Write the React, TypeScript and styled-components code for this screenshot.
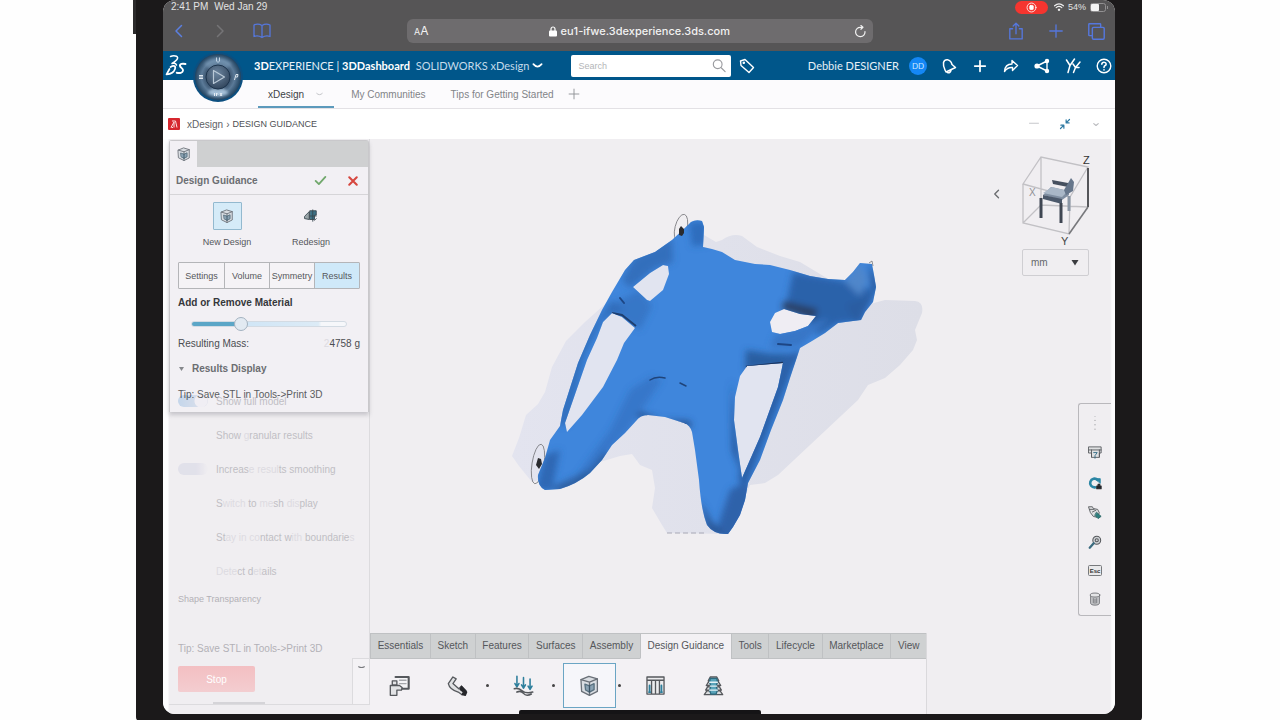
import React from "react";
import styled, { createGlobalStyle } from "styled-components";

const sans = `"Liberation Sans", Arial, sans-serif`;
const brand = `Lato, "Noto Sans", sans-serif`;

const Global = createGlobalStyle`
  * { box-sizing: border-box; }
  body { margin: 0; background: #fefefe; font-family: ${sans}; font-size: 10px; color: #55575b; }
  button { font: inherit; color: inherit; background: none; border: 0; padding: 0; cursor: pointer; }
  svg { display: block; flex: none; }
`;

const Page = styled.div`
  min-height: 100vh;
  display: flex;
  padding: 0 138px 0 133px;
`;
const VolumeKey = styled.div`
  width: 3px;
  height: 34px;
  background: #2b2a2b;
`;
const Tablet = styled.div`
  flex: 1;
  min-width: 0;
  display: flex;
  padding: 0 27px 7px;
  background: #1b191a;
  border-radius: 0 0 4px 4px;
`;
const Screen = styled.main`
  flex: 1;
  min-width: 0;
  position: relative;
  display: flex;
  flex-direction: column;
  background: #fff;
  border-radius: 12px;
  overflow: hidden;
`;
const HomeIndicator = styled.div`
  position: absolute;
  bottom: 0;
  left: 50%;
  width: 242px;
  margin-left: -120px;
  height: 4px;
  border-radius: 2px 2px 0 0;
  background: #151416;
`;

/* Browser chrome */
const StatusBar = styled.div`
  display: flex;
  align-items: center;
  height: 14px;
  padding: 0 7px 0 8px;
  gap: 6px;
  background: #565556;
  color: #e3e3e3;
  font: 10px/14px "Liberation Sans", sans-serif;
  span { white-space: nowrap; }
`;
const RecordPill = styled.span`
  display: flex;
  align-items: center;
  justify-content: center;
  width: 33px;
  height: 13px;
  margin-left: auto;
  border-radius: 7px;
  background: #f5352f;
`;
const StatusGroup = styled.span`
  display: flex;
  align-items: center;
  gap: 4px;
  font-size: 9px;
`;
const BrowserBar = styled.div`
  display: flex;
  align-items: center;
  height: 37px;
  padding-bottom: 3px;
  background: #565556;
`;
const BrowserLeft = styled.div`
  display: flex;
  align-items: center;
  gap: 25px;
  width: 244px;
  padding-left: 8px;
`;
const BrowserRight = styled.div`
  display: flex;
  align-items: center;
  justify-content: flex-end;
  gap: 22px;
  width: 242px;
  padding-right: 9px;
`;
const Address = styled.div`
  flex: 1;
  display: flex;
  align-items: center;
  justify-content: space-between;
  height: 24px;
  padding: 0 6px 0 7px;
  border-radius: 6px;
  background: #6e6c6e;
  color: #f1f1f1;
  font: 500 11px/24px Inter, sans-serif;
`;
const Host = styled.span`
  display: flex;
  align-items: center;
  gap: 4px;
  margin-right: 4px;
`;
const BigA = styled.span`
  font-size: 12px;
  font-weight: 400;
  small { font-size: 9px; }
`;

/* Dashboard header */
const TopBar = styled.header`
  position: relative;
  display: flex;
  align-items: center;
  height: 29px;
  padding: 0 4px 0 91px;
  background: #00568a;
  color: #e6f0f7;
  font: 11px/28px ${brand};
  white-space: nowrap;
`;
const Logo = styled.div`
  position: absolute;
  left: 2px;
  top: 3px;
`;
const Compass = styled.button`
  position: absolute;
  left: 29px;
  top: 0;
`;
const Product = styled.h1`
  margin: 0;
  font: inherit;
  b { color: #fff; }
  span { margin-left: 3px; color: #c4dbea; }
`;
const TopAction = styled.button<{ $narrow?: boolean }>`
  display: flex;
  align-items: center;
  justify-content: center;
  width: ${(p) => (p.$narrow ? "16px" : "31px")};
  height: 28px;
`;
const SearchBox = styled.label`
  display: flex;
  align-items: center;
  width: 160px;
  height: 22px;
  margin-left: 26px;
  padding: 0 5px 0 7px;
  border-radius: 2px;
  background: #fff;
  input {
    flex: 1;
    min-width: 0;
    border: 0;
    padding: 0;
    outline: 0;
    background: none;
    font: 9px/20px ${sans};
  }
  input::placeholder { color: #b3b5b8; opacity: 1; }
`;
const User = styled.span`
  margin-left: auto;
`;
const Avatar = styled.span`
  width: 18px;
  height: 18px;
  margin: 0 0 0 10px;
  border-radius: 50%;
  background: #1487f5;
  color: #cfe7ff;
  font: 8px/18px ${brand};
  text-align: center;
`;
const Actions = styled.div`
  display: flex;
  margin: 0 -8px 0 6px;
`;

const Tabs = styled.nav`
  display: flex;
  height: 29px;
  padding-left: 95px;
  border-bottom: 1px solid #e3e1e5;
  background: #fcfbfd;
  font-size: 10px;
`;
const Tab = styled.button<{ $active?: boolean; $gap: number }>`
  display: flex;
  align-items: center;
  gap: 11px;
  height: 28px;
  padding: ${(p) => (p.$active ? "2px 10px 0" : "2px 0 0")};
  margin-right: ${(p) => p.$gap}px;
  color: ${(p) => (p.$active ? "#3d4247" : "#828488")};
  border-bottom: 2px solid ${(p) => (p.$active ? "#5c9abc" : "transparent")};
`;
const Crumbs = styled.div`
  display: flex;
  align-items: center;
  gap: 7px;
  height: 30px;
  padding: 0 13px 0 5px;
  color: #606266;
`;
const CrumbText = styled.span`
  display: flex;
  align-items: center;
  gap: 3px;
  b { font: 9px/12px ${sans}; color: #4d4f53; }
`;
const WindowTools = styled.span`
  display: flex;
  align-items: center;
  gap: 19px;
  margin-left: auto;
`;

/* Workspace */
const Workspace = styled.section`
  flex: 1;
  display: flex;
  padding: 0 4px 0 6px;
  background: linear-gradient(90deg, #fdfdfe 5px, #f0eef1 6px, #f0eef1 calc(100% - 5px), #fdfdfe calc(100% - 3px));
`;
const Aside = styled.aside`
  position: relative;
  flex: none;
  width: 201px;
  padding-top: 1px;
  margin-bottom: 9px;
  border-right: 1px solid #dcdbde;
  border-bottom: 1px solid #dcdbde;
`;
const Card = styled.div`
  height: 272px;
  border: 1px solid #c9c8cb;
  border-width: 1px 1px 0;
  border-radius: 3px 3px 0 0;
  background: #f2f0f4;
  box-shadow: 0 3px 4px rgba(90, 90, 100, 0.28);
`;
const CardTabs = styled.div`
  display: flex;
  height: 26px;
  background: linear-gradient(90deg, #f2f0f4 27px, #cfd0d1 27px);
  padding: 6px 7px;
`;
const CardHead = styled.div`
  display: flex;
  align-items: center;
  height: 28px;
  padding: 0 9px 0 6px;
  border-bottom: 1px solid #d6d5d8;
  h2 { flex: 1; margin: 0; font-size: 10px; color: #6c6e72; }
  button + button { margin-left: 20px; }
`;
const Modes = styled.div`
  display: grid;
  grid-template-columns: 84px 84px;
  padding: 7px 0 0 15px;
  height: 67px;
`;
const Mode = styled.button<{ $on?: boolean }>`
  display: flex;
  flex-direction: column;
  align-items: center;
  gap: 6px;
  height: 46px;
  font-size: 9px;
  line-height: 12px;
  i {
    display: flex;
    align-items: center;
    justify-content: center;
    width: 29px;
    height: 28px;
    border: 1px solid ${(p) => (p.$on ? "#93b9cf" : "transparent")};
    border-radius: 1px;
    background: ${(p) => (p.$on ? "#d5ebf8" : "transparent")};
  }
`;
const Segments = styled.div`
  display: grid;
  grid-template-columns: repeat(4, 1fr);
  margin: 0 8px;
  height: 27px;
  border: 1px solid #b4b5b8;
  border-radius: 1px;
`;
const Segment = styled.button<{ $on?: boolean }>`
  font-size: 9px;
  background: ${(p) => (p.$on ? "#cfe9f9" : "#f5f3f6")};
  & + & { border-left: 1px solid #b4b5b8; }
`;
const CardBody = styled.div`
  padding: 4px 8px 0;
  line-height: 20px;
  h3 { margin: 0; font-size: 10px; color: #35373a; }
`;
const Slider = styled.input`
  appearance: none;
  display: block;
  width: 156px;
  height: 16px;
  margin: 3px 0 2px 13px;
  background: none;
  &::-webkit-slider-runnable-track {
    height: 6px;
    border: 1px solid #d3dbe3;
    border-radius: 3px;
    background: linear-gradient(90deg, #5ba6c7 30%, #cfe5f6 30%, #dcebf6 82%, #f6f7fa 84%);
  }
  &::-webkit-slider-thumb {
    appearance: none;
    width: 14px;
    height: 14px;
    margin-top: -5px;
    border: 1px solid #a3b2c0;
    border-radius: 50%;
    background: #e2eaf2;
  }
`;
const Mass = styled.div`
  display: flex;
  justify-content: space-between;
  height: 20px;
  color: #4b4d51;
`;
const Disclosure = styled.button`
  display: flex;
  align-items: center;
  gap: 6px;
  height: 20px;
  margin: 5px 0 6px;
  font-weight: bold;
  color: #6b6d71;
`;
const Tip = styled.p<{ $faded?: boolean }>`
  margin: 0;
  font-size: 10px;
  line-height: 20px;
  color: ${(p) => (p.$faded ? "#b3b1b7" : "#5a5c60")};
`;

/* Options fading out under the card */
const Fading = styled.div`
  position: relative;
  margin-top: -28px;
  padding: 0 9px;
`;
const Option = styled.label`
  display: flex;
  align-items: center;
  height: 34px;
  font-size: 10px;
  white-space: pre;
  color: #c0bec4;
`;
const Toggle = styled.input<{ $tint: string }>`
  appearance: none;
  width: 30px;
  height: 12px;
  margin: 0 8px 0 0;
  border-radius: 6px;
  background: ${(p) => p.$tint};
  mix-blend-mode: multiply;
`;
const Faint = styled.span`
  color: #dddbe1;
`;
const FadingTitle = styled.div`
  height: 22px;
  margin-bottom: 29px;
  font-size: 9px;
  line-height: 22px;
  color: #b3b1b7;
`;
const Stop = styled.button`
  display: block;
  width: 77px;
  height: 26px;
  margin-top: 7px;
  border-radius: 2px;
  background: linear-gradient(180deg, #f3bfc2, #f3cdd0);
  color: #fff;
`;
const ScrollHint = styled.div`
  width: 52px;
  height: 2px;
  margin: 10px 0 0 35px;
  background: #d5d4d8;
`;
const PanelScroll = styled.button`
  position: absolute;
  right: 0;
  bottom: 0;
  display: flex;
  justify-content: center;
  width: 17px;
  height: 46px;
  padding-top: 6px;
  border: 1px solid #dcdbde;
  border-width: 1px 0 0 1px;
  background: #f4f2f5;
`;

const Stage = styled.div`
  flex: 1;
  min-width: 0;
  display: flex;
  flex-direction: column;
`;
const Viewport = styled.div`
  flex: 1;
  display: flex;
`;
const ModelArea = styled.div`
  flex: 1;
  min-width: 0;
  display: flex;
  svg { flex: 1; width: 100%; height: 493px; }
`;
const ViewTools = styled.div`
  flex: none;
  width: 121px;
  display: flex;
  flex-direction: column;
  align-items: flex-end;
`;
const CubeRow = styled.div`
  display: flex;
  align-items: center;
  gap: 19px;
  height: 110px;
  padding-right: 21px;
  svg[role="img"] { margin-top: 10px; }
`;
const Unit = styled.div`
  position: relative;
  width: 67px;
  height: 27px;
  margin-right: 22px;
  border: 1px solid #cfced2;
  border-radius: 2px;
  select {
    appearance: none;
    width: 100%;
    height: 25px;
    padding: 0 8px;
    border: 0;
    background: none;
    color: #66686c;
    font: 10px ${sans};
  }
  svg { position: absolute; right: 9px; top: 9px; pointer-events: none; }
`;
const SideBar = styled.div`
  display: flex;
  flex-direction: column;
  align-items: center;
  justify-content: space-between;
  width: 33px;
  height: 213px;
  margin-top: 127px;
  padding: 12px 0 9px;
  border: 1px solid #b9b8bc;
  border-right: 0;
  border-radius: 3px 0 0 3px;
`;
const CommandBar = styled.div`
  align-self: flex-start;
  min-width: 557px;
  border-right: 1px solid #dad9dc;
`;
const CommandTabs = styled.div`
  display: flex;
  height: 26px;
  background: #cfd1d2;
`;
const CommandTab = styled.button<{ $on?: boolean }>`
  flex: auto;
  padding: 0 6px 1px;
  font-size: 10px;
  white-space: nowrap;
  color: #55575b;
  background: ${(p) => (p.$on ? "#f3f1f4" : "transparent")};
  border: 1px solid #bfc1c3;
  border-width: 1px 0 1px 1px;
  border-bottom-color: ${(p) => (p.$on ? "#f3f1f4" : "#bfc1c3")};
`;
const Commands = styled.div`
  display: flex;
  align-items: center;
  height: 55px;
  padding: 0 0 3px 3px;
  background: #f3f1f4;
`;
const Command = styled.button<{ $on?: boolean; $gap?: number }>`
  display: flex;
  align-items: center;
  justify-content: center;
  width: 53px;
  height: 45px;
  margin-right: ${(p) => p.$gap || 0}px;
  border: 1px solid ${(p) => (p.$on ? "#6aa5c4" : "transparent")};
  background: ${(p) => (p.$on ? "#f6f6fa" : "transparent")};
`;
const Dot = styled.span`
  width: 3px;
  height: 3px;
  margin: 0 8px 0 2px;
  border-radius: 50%;
  background: #444;
`;

type G = { s?: number; c?: string; sw?: number; children: React.ReactNode };
/* Stroked glyph on a 16-unit grid */
const Glyph = ({ s = 16, c = "currentColor", sw = 1.2, children }: G) => (
  <svg width={s} height={s} viewBox="0 0 16 16" fill="none" stroke={c} strokeWidth={sw} strokeLinecap="round" strokeLinejoin="round" aria-hidden>
    {children}
  </svg>
);

const Cube = ({ s = 14 }: { s?: number }) => (
  <Glyph s={s} c="#6a7078" sw={1}>
    <path d="M1.5 3.5 7.5 1 14 3v9.5L8 15.5 2 12.5z" fill="#d9dde2" />
    <path d="M1.5 3.5 8 5.5l6-2.5M8 5.5v10" />
    <path d="M4.5 7 8 8.2 11.5 6.6v4.6L8 13 5 11.4z" fill="#8aa2b3" stroke="#58707f" />
    <path d="M8 8.2V13" stroke="#3d5566" />
  </Glyph>
);

const CompassArt = () => (
  <svg width="52" height="52" viewBox="0 0 52 52" aria-hidden>
    <defs>
      <radialGradient id="ring" cx="50%" cy="50%" r="50%">
        <stop offset="40%" stopColor="#2a4058" />
        <stop offset="72%" stopColor="#5b7a98" />
        <stop offset="100%" stopColor="#22435f" />
      </radialGradient>
      <radialGradient id="hub" cx="45%" cy="35%" r="65%">
        <stop offset="0%" stopColor="#6c859f" />
        <stop offset="100%" stopColor="#33475e" />
      </radialGradient>
      <filter id="sheen" x="-20%" y="-20%" width="140%" height="140%"><feGaussianBlur stdDeviation="1.5" /></filter>
    </defs>
    <circle cx="26" cy="26" r="25" fill="#0c4f80" />
    <circle cx="26" cy="26" r="23" fill="url(#ring)" />
    <g filter="url(#sheen)">
      <path d="M12 13A20 20 0 0 1 40 13L34 18A12 12 0 0 0 18 18z" fill="#7f9fbc" opacity=".6" />
      <path d="M15 42A20 20 0 0 0 37 42L31 37A12 12 0 0 1 21 37z" fill="#b6d2e8" opacity=".8" />
    </g>
    <circle cx="26" cy="26" r="12" fill="url(#hub)" stroke="#1d344d" />
    <path d="M21.500 19.500v13l11-6.500z" fill="none" stroke="#b9c8d6" strokeWidth="1.200" strokeLinejoin="round" />
    <path d="M7 24.500h4M7 27.500h4M7 26h4" stroke="#dde6ee" strokeWidth="1.200" />
    <path d="M42.500 29l1.500-5.500h2l-.5 2.500h-1.500" stroke="#dde6ee" fill="none" />
    <path d="M24.500 6.500v3.500l1.500 1.500 1.500-1.500V6.500" stroke="#c3d5e5" fill="none" />
    <path d="M22.500 42v3M24.500 45v-3l1.500 1.500M28 42l2 3M30 42l-2 3" stroke="#e6eef5" fill="none" />
  </svg>
);

const LogoArt = () => (
  <svg width="22" height="24" viewBox="0 0 22 24" fill="none" stroke="#fff" strokeLinecap="round" strokeLinejoin="round" aria-hidden>
    <path d="M5.500 2.500C8 1.500 13.500 1.500 12.500 4.500 11.800 6.500 9.500 8 7 9.500 9 9 11 9.500 11.500 11" strokeWidth="1.500" />
    <path d="M5.500 13C9 11 11 12 10 15 9 18 6 20 1.500 20.500L4.500 15" strokeWidth="1.700" />
    <path d="M20.500 10c-3-.7-6-.2-5.500 2 .4 1.800 3.400 2.400 3 4.600-.4 2.200-3.300 2.900-6.300 2.200" strokeWidth="1.900" />
  </svg>
);

const ViewCube = () => (
  <svg role="img" width="68" height="94" viewBox="1022 152 68 94" fill="none" aria-label="View orientation">
    <path d="M1023 184 1041 157 1088 167 1070 197zM1023 184V223L1069 234 1070 197M1041 157V205L1023 223M1041 205 1088 207" stroke="#c2c1c5" strokeWidth="1.300" />
    <path d="M1088 168V207" stroke="#55565a" strokeWidth="2" />
    <path d="M1088 207 1069 234" stroke="#77787c" strokeWidth="1.600" />
    <path d="M1043 195 1062 200 1069 195 1069 191 1051 187z" fill="#7f8ea1" />
    <path d="M1043 193 1052 187 1068 191 1062 197z" fill="#a9b7c7" />
    <path d="M1043 195 1062 199V204L1043 199z" fill="#4c596b" />
    <path d="M1052 180 1068 183V187L1053 184z" fill="#46505f" />
    <path d="M1064 190 1071 178 1074 182 1073 191 1066 195z" fill="#66768b" />
    <path d="M1041 198V218M1061 203V223" stroke="#3f4652" strokeWidth="3" />
    <path d="M1069 196V211" stroke="#8b97a6" strokeWidth="3" />
    <g fontFamily="Liberation Sans" fontSize="11">
      <text x="1083" y="164" fill="#333">Z</text>
      <text x="1061" y="245" fill="#444">Y</text>
      <text x="1029" y="196" fill="#909196" fontSize="10">X</text>
    </g>
  </svg>
);

const body =
  "M688 225 691 222Q696 219 702 221L704 227 703 247 712 249 722 252 735 260 755 264 770 265 790 270 810 276 828 279 845 280 853 272 860 263 872 264 874 275 876 287 873 302 865 312 861 320 853 321 838 323 825 333 812 341 800 348 798 354 790 378 783 400 771 430 760 460 748 483 745 500 740 515 733 527 728 534 Q714 535 707 525 701 510 699 480 L695 450 692 432Q690 425 684 423L665 417 648 415Q640 415 636 421L625 433 612 445 602 460 590 473Q577 484 560 489 L545 490Q537 486 538 475L545 458 550 440 560 426 563 410 570 388 578 363 590 335 602 310 612 292 625 270 634 260 655 252 672 240z";
const rightWindow = "M770 322 775 313 784 309 800 314 816 316 808 326 795 331 780 334 772 332z";
const holes =
  "M633 287 650 273 663 265 668 266 669 274 663 290 650 301 647 300zM603 322 612 313 622 317 635 328 624 343 617 360 603 387 582 415 567 432 565 423 572 403 580 380 587 360 597 338zM747 366 783 363 778 387 760 437 742 478 738 450 734 420 735 397 740 376z" +
  rightWindow;

const Model = () => (
  <svg viewBox="370 139 620 493" preserveAspectRatio="xMidYMid meet" role="img" aria-label="Generated chair bracket">
    <defs>
      <clipPath id="solid"><path d={body + holes} clipRule="evenodd" /></clipPath>
      <filter id="soft" x="-30%" y="-30%" width="160%" height="160%"><feGaussianBlur stdDeviation="3" /></filter>
      <linearGradient id="veil" x1="0" y1="0" x2="1" y2="0">
        <stop offset="0" stopColor="#e3e4ef" />
        <stop offset="1" stopColor="#dddee7" />
      </linearGradient>
    </defs>
    <path fill="url(#veil)" d="M603 306 585 322 566 341 552 367 545 392 538 404 526 415 519 438 512 456 519 466 532 482 600 462 620 456 632 454 640 465 652 470 655 488 652 508 662 525 667 533 728 534 750 485 765 483 778 475 858 400 868 385 885 378 900 365 913 350 917 340 915 330 922 313Q924 302 915 301L885 300 870 304 825 277 800 262 780 256 757 247 742 236Q732 233 722 240L716 242 704 235 680 250z" />
    <path d={holes} fill="#e1e4f0" />
    <path d={rightWindow} fill="#efedf3" />
    <g fill="none" stroke="#77787c" strokeWidth=".8">
      <ellipse cx="681" cy="228" rx="6" ry="14" transform="rotate(14 681 228)" />
      <ellipse cx="538" cy="464" rx="6" ry="20" transform="rotate(9 538 464)" />
      <path d="M869 263 872 261 873 266" />
    </g>
    <path d={body + holes} fillRule="evenodd" fill="#3f86dc" />
    <g clipPath="url(#solid)">
      <g filter="url(#soft)">
        <path d="M634 258 672 238 673 262 655 268 630 288 622 280z" fill="#3069b4" opacity=".8" />
        <path d="M640 290 652 306 640 330 625 322 610 305z" fill="#356fbd" opacity=".7" />
        <path d="M612 300 624 312 604 318 585 355 568 425 556 425 575 350z" fill="#2f68b4" opacity=".75" />
        <path d="M793 272 850 282 872 290 862 322 838 323 818 335 806 320 786 306z" fill="#2b62aa" />
        <path d="M784 301 818 309 814 319 782 309z" fill="#2a3f63" />
        <path d="M746 350 770 354 800 354 795 366 745 370z" fill="#275796" opacity=".85" />
        <path d="M775 335 830 318 800 346 770 348z" fill="#3976c6" />
        <path d="M783 358 800 350 745 490 738 478z" fill="#2a61a8" />
        <path d="M845 282 860 262 868 280 860 296z" fill="#4f86ca" />
        <path d="M868 262 880 285 858 325 845 305 872 295z" fill="#2a5da2" />
        <path d="M689 222 706 222 706 245 692 246z" fill="#2f6dbd" />
        <path d="M630 390 652 376 662 380 628 430 600 462 585 482 575 478 610 430z" fill="#2c67b3" opacity=".45" />
        <path d="M545 455 560 450 552 490 536 490z" fill="#2f68b4" />
        <path d="M550 488 590 470 605 452 612 458 570 496z" fill="#2b5896" opacity=".8" />
        <path d="M636 417 690 421 692 428 640 412z" fill="#254f8c" />
        <path d="M748 480 730 490 715 534 735 536 752 500z" fill="#2d62aa" />
        <path d="M731 380 738 450 744 480 732 450z" fill="#27589c" />
        <path d="M700 500 708 532 732 540 712 522z" fill="#2a5795" />
      </g>
      <path d="M650 380Q656 376 665 378M680 383 686 386" stroke="#1f447a" strokeWidth="1.500" fill="none" strokeLinecap="round" />
      <path d="M620 298 624 303M778 344 791 345" stroke="#1d4685" strokeWidth="2" fill="none" strokeLinecap="round" />
      <path d="M612 313 622 315 636 326" stroke="#1f3f70" strokeWidth="2" fill="none" />
      <path d="M746 367 783 363" stroke="#1c335b" strokeWidth="2.500" />
      <path d="M646 416 686 424" stroke="#25508c" strokeWidth="1.500" />
    </g>
    <path d="M679 235V229L681 226 684 229V233L682 236zM536 465 538 458 541 459 542 464 539 469z" fill="#2a2b2e" />
    <path d="M667 533H705" stroke="#a9a9b6" strokeDasharray="5 3" />
  </svg>
);

const cmdTabs = ["Essentials", "Sketch", "Features", "Surfaces", "Assembly", "Design Guidance", "Tools", "Lifecycle", "Marketplace", "View"];
const dark = "#55585c";
const teal = "#2e7f9c";

export default function App() {
  return (
    <>
      <Global />
      <Page>
        <VolumeKey />
        <Tablet>
          <Screen>
            <StatusBar>
              <span>2:41 PM</span>
              <span>Wed Jan 29</span>
              <RecordPill>
                <Glyph s={11} c="#fff"><circle cx="8" cy="8" r="6.500" /><rect x="5.500" y="5" width="5" height="6" rx="1" fill="#fff" /></Glyph>
              </RecordPill>
              <StatusGroup>
                <Glyph s={10} c="#eee" sw={2}><path d="M1 6Q8 0 15 6M3.500 9Q8 5 12.500 9M7 12.500 8 13.500 9 12.500 8 11.500z" /></Glyph>
                <span>54%</span>
                <svg width="18" height="9" viewBox="0 0 18 9" fill="none" aria-hidden>
                  <rect x=".5" y=".5" width="15" height="8" rx="2" stroke="#929192" />
                  <rect x="1" y="1" width="8" height="7" rx="1" fill="#f4f4f4" />
                  <path d="M17.500 3v3" stroke="#929192" />
                </svg>
              </StatusGroup>
            </StatusBar>
            <BrowserBar>
              <BrowserLeft>
                <button aria-label="Back"><Glyph c="#5b7fe0" sw={1.5}><path d="M10.500 2.500 5 8l5.500 5.500" /></Glyph></button>
                <button aria-label="Forward"><Glyph c="#757476" sw={1.5}><path d="M5.500 2.500 11 8l-5.500 5.500" /></Glyph></button>
                <button aria-label="Bookmarks">
                  <svg width="18" height="16" viewBox="0 0 18 16" fill="none" stroke="#5577dc" strokeWidth="1.300" strokeLinejoin="round" aria-hidden>
                    <path d="M9 2.500Q5 0 1 2v11.500q4-1.500 8 1 4-2.500 8-1V2q-4-2-8 .5zM9 2.500v12" />
                  </svg>
                </button>
              </BrowserLeft>
              <Address>
                <BigA><small>A</small>A</BigA>
                <Host>
                  <svg width="8" height="11" viewBox="0 0 8 11" aria-hidden>
                    <rect x="0" y="4.500" width="8" height="6" rx="1" fill="#fff" />
                    <path d="M2 5V3a2 2 0 0 1 4 0v2" fill="none" stroke="#fff" strokeWidth="1.200" />
                  </svg>
                  eu1-ifwe.3dexperience.3ds.com
                </Host>
                <button aria-label="Reload"><Glyph s={13} sw={1.5}><path d="M13.500 8A5.800 5.800 0 1 1 8 2.800h2.500M8.500.5l2.500 2.300L8.500 5.200" /></Glyph></button>
              </Address>
              <BrowserRight>
                <button aria-label="Share"><Glyph s={18} c="#5577dc"><path d="M5 6H2.500v9h11V6H11M8 10.500V1.200M5.500 3.500 8 1l2.500 2.500" /></Glyph></button>
                <button aria-label="New tab"><Glyph s={18} c="#5577dc"><path d="M8 2.500v11M2.500 8h11" /></Glyph></button>
                <button aria-label="Tabs"><Glyph s={19} c="#5577dc"><rect x="4.500" y="4.500" width="10" height="10" rx="1" /><path d="M4 11.500H2a.5.5 0 0 1-.5-.5V2a.5.5 0 0 1 .5-.5h9a.5.5 0 0 1 .5.5v2" /></Glyph></button>
              </BrowserRight>
            </BrowserBar>

            <TopBar>
              <Logo><LogoArt /></Logo>
              <Compass aria-label="Compass"><CompassArt /></Compass>
              <Product><b>3D</b>EXPERIENCE | <b>3DDashboard</b> <span>SOLIDWORKS xDesign</span></Product>
              <TopAction $narrow aria-label="Switch dashboard"><Glyph s={11} c="#fff" sw={2.5}><path d="M2 6Q5 9.500 8 9.500T14 6" /></Glyph></TopAction>
              <SearchBox>
                <input placeholder="Search" aria-label="Search" />
                <Glyph s={14} c="#9a9b9f" sw={1.3}><circle cx="6.500" cy="6" r="5" /><path d="M10.500 10 15 14.500" /></Glyph>
              </SearchBox>
              <TopAction aria-label="Tags"><Glyph c="#fff" sw={1.4}><path d="M1.500 3 6 1.500 14.500 9.500 10 14.500 2 7.500z" /><circle cx="4.800" cy="4.800" r=".6" /></Glyph></TopAction>
              <User>Debbie DESIGNER</User>
              <Avatar>DD</Avatar>
              <Actions>
                <TopAction aria-label="Notifications"><Glyph s={16} c="#fff" sw={1.5}><path d="M4 12Q2 8 2.500 4.500 3.500 1.500 6.500 1.800 10 2.500 11 6.500L14.500 9.500 5 14zM6.500 14.500Q9 15.500 10 12.500" /></Glyph></TopAction>
                <TopAction aria-label="Add"><Glyph s={14} c="#fff" sw={2}><path d="M8 2v12M2 8h12" /></Glyph></TopAction>
                <TopAction aria-label="Forward content"><Glyph c="#fff" sw={1.4}><path d="M1.500 13.500Q2 6 9 6V2.500L14.500 7.500 9.500 12.500V9.500Q4.500 9 1.500 13.500z" /></Glyph></TopAction>
                <TopAction aria-label="Share content"><Glyph c="#fff" sw={2}><path d="M13 3 3 8l10 5zM13 3v10" strokeWidth="1.400" /><circle cx="13" cy="3" r="1.200" fill="#fff" /><circle cx="3" cy="8" r="1.600" fill="#fff" /><circle cx="13" cy="13" r="1.200" fill="#fff" /></Glyph></TopAction>
                <TopAction aria-label="Communities"><Glyph c="#fff" sw={1.5}><path d="M1.500 2 5 7.500 9.500 1M5 7.500 3 14.500M8 6l2.500 3.500L15 4M10.500 9.500 8.500 14.500M11 9.500h3" /></Glyph></TopAction>
                <TopAction aria-label="Help"><Glyph s={16} c="#fff" sw={1.4}><circle cx="8" cy="8" r="6.800" /><path d="M5.800 6.200Q6 4.200 8 4.200T10.200 6Q10.200 7.200 8.800 7.800 8 8.200 8 9.500M8 11.800v.1" strokeWidth="1.600" /></Glyph></TopAction>
              </Actions>
            </TopBar>

            <Tabs>
              <Tab $active $gap={17}>xDesign <Glyph s={9} c="#b9bbbf" sw={1.5}><path d="M3 6Q8 11 13 6" /></Glyph></Tab>
              <Tab $gap={25}>My Communities</Tab>
              <Tab $gap={14}>Tips for Getting Started</Tab>
              <Tab $gap={0} aria-label="Add tab"><Glyph s={12} c="#8d8f93"><path d="M8 1.500v13M1.500 8h13" /></Glyph></Tab>
            </Tabs>
            <Crumbs>
              <svg width="12" height="12" viewBox="0 0 12 12" aria-hidden>
                <rect width="12" height="12" rx="1" fill="#d6272e" />
                <path d="M3 9.500 6 4v5.500M4 3h3.500l1.500 6.500M3.500 9.500H5" stroke="#fbe3e3" fill="none" />
              </svg>
              <CrumbText>xDesign <span>›</span> <b>DESIGN GUIDANCE</b></CrumbText>
              <WindowTools>
                <Glyph s={12} c="#c0c1c5"><path d="M2 7h12" /></Glyph>
                <Glyph s={12} c="#2f7aa3" sw={1.6}><path d="M14 2 9.500 6.500M9.500 2.500v4h4M2 14l4.500-4.500M2.500 9.500h4v4" /></Glyph>
                <Glyph s={12} c="#b9babe" sw={1.5}><path d="M5 7.500 8 10l3-2.500" /></Glyph>
              </WindowTools>
            </Crumbs>

            <Workspace>
              <Aside>
                <Card>
                  <CardTabs><Cube /></CardTabs>
                  <CardHead>
                    <h2>Design Guidance</h2>
                    <button aria-label="Accept"><Glyph s={13} c="#71a86c" sw={2.2}><path d="M2 8.500 6 12.500 14 3.500" /></Glyph></button>
                    <button aria-label="Cancel"><Glyph s={12} c="#d6473f" sw={2.8}><path d="M3 3l10 10M13 3 3 13" /></Glyph></button>
                  </CardHead>
                  <Modes>
                    <Mode $on><i><Cube /></i>New Design</Mode>
                    <Mode>
                      <i><Glyph s={14} c="#38474f" sw={1}><path d="M1 8 6 3v9L1 11z" fill="#9aa5a8" /><path d="M7 2h7v5h-2v5H7z" fill="#3b7186" /><path d="M10 1v13M7 8h7M12 13l2-2" /></Glyph></i>
                      Redesign
                    </Mode>
                  </Modes>
                  <Segments>
                    <Segment>Settings</Segment>
                    <Segment>Volume</Segment>
                    <Segment>Symmetry</Segment>
                    <Segment $on>Results</Segment>
                  </Segments>
                  <CardBody>
                    <h3><label htmlFor="material">Add or Remove Material</label></h3>
                    <Slider id="material" type="range" min={0} max={100} defaultValue={30} />
                    <Mass><span>Resulting Mass:</span><span><Faint>2</Faint>4758 g</span></Mass>
                    <Disclosure>
                      <svg width="8" height="6" viewBox="0 0 8 6" aria-hidden><path d="M1 1h5L3.500 5z" fill="#85878b" /></svg>
                      Results Display
                    </Disclosure>
                    <Tip>{"Tip: Save STL in Tools->Print 3D"}</Tip>
                  </CardBody>
                </Card>
                <Fading>
                  <Option><Toggle type="checkbox" $tint="radial-gradient(circle at 23px 6px, #fdfdff 6px, transparent 7px), linear-gradient(90deg, #cfe4f6, #eceff6)" defaultChecked />Show full model</Option>
                  <Option><Toggle type="checkbox" $tint="transparent" />Show <Faint>g</Faint>ranular results</Option>
                  <Option><Toggle type="checkbox" $tint="linear-gradient(90deg, #f0f1f8 60%, transparent)" />Increas<Faint>e resul</Faint>ts smoothing</Option>
                  <Option><Toggle type="checkbox" $tint="transparent" />S<Faint>witch</Faint> to <Faint>me</Faint>sh <Faint>dis</Faint>play</Option>
                  <Option><Toggle type="checkbox" $tint="transparent" />St<Faint>ay in co</Faint>ntact w<Faint>ith</Faint> boundarie<Faint>s</Faint></Option>
                  <Option><Toggle type="checkbox" $tint="transparent" /><Faint>Dete</Faint>ct d<Faint>et</Faint>ails</Option>
                  <FadingTitle>Shape Transparency</FadingTitle>
                  <Tip $faded>{"Tip: Save STL in Tools->Print 3D"}</Tip>
                  <Stop>Stop</Stop>
                  <ScrollHint />
                </Fading>
                <PanelScroll aria-label="Scroll down"><Glyph s={9} c="#77797d" sw={2}><path d="M3 3Q8 6 13 3" /></Glyph></PanelScroll>
              </Aside>

              <Stage>
                <Viewport>
                  <ModelArea><Model /></ModelArea>
                  <ViewTools>
                    <CubeRow>
                      <button aria-label="Collapse"><Glyph s={12} c="#6a6c70" sw={1.8}><path d="M10 3 5 8l5 5" /></Glyph></button>
                      <ViewCube />
                    </CubeRow>
                    <Unit>
                      <select aria-label="Units" defaultValue="mm"><option>mm</option></select>
                      <svg width="8" height="7" viewBox="0 0 8 7" aria-hidden><path d="M.5 1h7L4 6.500z" fill="#3b3c40" /></svg>
                    </Unit>
                    <SideBar>
                      <Glyph s={14} c="#a5a6aa" sw={1.5}><path d="M8 0v0M8 5v0M8 10v0M8 15v0" /></Glyph>
                      <Glyph s={14} c={dark} sw={1}><path d="M1 1h14v7h-2v5H4V8H1zM1 4.500h14" fill="#dfe0e2" /><path d="M6.500 7.500h4L8 11v3" stroke="#2c6782" /><path d="M4 4.500v8M13 4.500v8" /></Glyph>
                      <Glyph s={14} c="#2b86a5" sw={3}><path d="M11 4.500A5 5 0 1 0 8 13" /><path d="M8 3h6v5z" fill="#2b86a5" strokeWidth="1" /><path d="M10 11.500h5v3h-5zM11.500 11V9.500h2V11" fill="#24262b" stroke="#24262b" strokeWidth="1.200" /></Glyph>
                      <Glyph s={14} c={dark} sw={1}><path d="M1 2h4l1 2 5 1 2 4-3 5-4-1-3-4z" fill="#dfe0e2" /><path d="M2 5h5M5 8l4-2" /><path d="M10 8.500l5 4.500-3.500 2.500L8 12z" fill="#2e7f7e" stroke="#2b6464" /></Glyph>
                      <Glyph s={14} c={dark} sw={1.2}><circle cx="10" cy="6" r="4.500" fill="#cdd0d4" /><circle cx="10" cy="6" r="1.800" /><path d="M6.500 9.500 2 14.500" stroke="#3c6c80" strokeWidth="2.600" /></Glyph>
                      <svg width="14" height="11" viewBox="0 0 14 11" aria-hidden>
                        <rect x=".5" y=".5" width="13" height="10" rx="1" fill="#e9e9eb" stroke="#77797d" />
                        <text x="7" y="8" fontFamily="Liberation Sans" fontSize="6" fontWeight="bold" textAnchor="middle" fill="#333">Esc</text>
                      </svg>
                      <Glyph s={14} c="#6b6d71" sw={1}><path d="M3 4v8.500Q3 15 8 15t5-2.500V4" fill="#c9cacd" /><ellipse cx="8" cy="3.500" rx="5.500" ry="2.300" fill="#e4e4e6" /><path d="M6 7.500v5M8 8v5M10 7.500v5" /></Glyph>
                    </SideBar>
                  </ViewTools>
                </Viewport>
                <CommandBar>
                  <CommandTabs>
                    {cmdTabs.map((t) => <CommandTab key={t} $on={t === "Design Guidance"}>{t}</CommandTab>)}
                  </CommandTabs>
                  <Commands>
                    <Command aria-label="Design assistant" $gap={5}>
                      <Glyph s={21} c={dark} sw={1}><path d="M5 1.500h10v9H9" fill="#f4f4f6" strokeWidth="1.600" /><path d="M8 4h5M8 6.500h5" stroke="#a5a7ab" /><path d="M2.500 4.500h3.500v3h-3.500zM1 8h7l2 1.500-.5 2H6v4H1z" fill="#e2e3e5" /></Glyph>
                    </Command>
                    <Command aria-label="Shape"><Glyph s={21} c={dark} sw={1}><path d="M4.500 1.500 7 3 4.500 6.500 9 10.500l2-2 3.500 3.500-3 3-3-2Q2 11 1 6.500z" fill="#e0e1e3" /><path d="M11 8.500l4 4.500-1 2.500-2.500-.5 1-2-2.500-2z" fill="#26272b" stroke="#26272b" /></Glyph></Command>
                    <Dot />
                    <Command aria-label="Loads"><Glyph s={21} c={teal} sw={1.2}><path d="M3 1v8M8 2v8M13 3v8M1.500 6.500 3 9l1.500-2.500M6.500 7.500 8 10l1.500-2.500M11.500 8.500 13 11l1.500-2.500" /><path d="M1 10.500q3-1 6 1.500t8 1M3 13q3-1.500 5 1t6 .5" stroke={dark} /></Glyph></Command>
                    <Dot />
                    <Command aria-label="Generate design" $on><Cube s={21} /></Command>
                    <Dot />
                    <Command aria-label="Plot" $gap={5}><Glyph s={21} c={dark} sw={1}><path d="M1.500 1.500h13v13h-13zM1.500 4h13M5 4v10M8 4v10M11 4v10" fill="#ececee" /><path d="M3.500 8v5M3 13h1M12.500 8v5M12 13h1" stroke={teal} strokeWidth="1.400" /></Glyph></Command>
                    <Command aria-label="Layers"><Glyph s={21} c={dark} sw={1}><path d="M4 4.500 5.500 1.500h5L12 4.500zM2.500 8 4 5.500h8L13.500 8zM2 11.500 3.500 9h9L14 11.500zM1 15l2-3h10l2 3z" fill="#d8dadc" /><path d="M5.500 2.500h5l.5 3-1 3 1 3-1 3H6l-1-3 1-3-1-3z" fill="#58a3b9" stroke="#2c6b80" /><path d="M5 5.500h6M5.500 8.500h5M5 11.500h6" stroke="#e3f1f5" /></Glyph></Command>
                  </Commands>
                </CommandBar>
              </Stage>
            </Workspace>
            <HomeIndicator />
          </Screen>
        </Tablet>
      </Page>
    </>
  );
}
